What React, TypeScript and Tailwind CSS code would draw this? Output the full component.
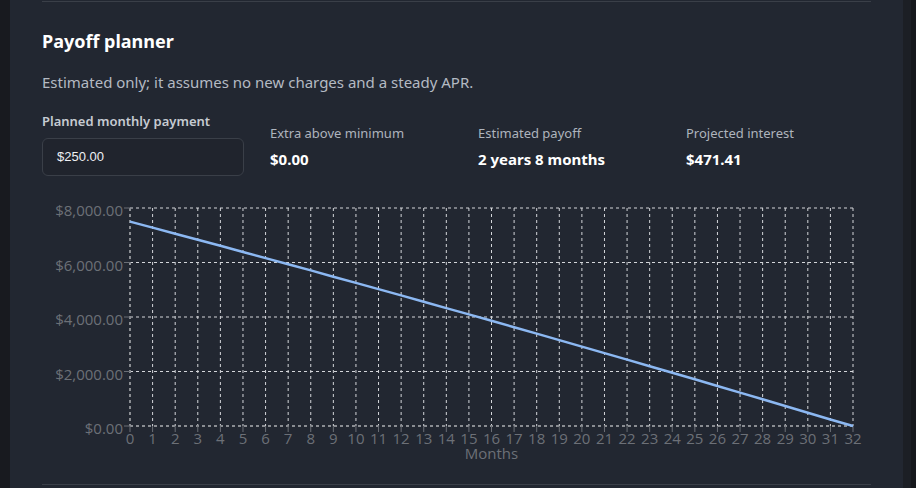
import React from 'react';

const MONTHS = 32;
const START_BALANCE = 7500;
const APR = 0.0465;
const PAYMENT = 250;

// plot geometry, in svg coordinates (svg starts at the card content's left edge)
const W = 829;
const H = 266;
const LEFT = 88;
const RIGHT = 811;
const TOP = 12;
const BOTTOM = 230;
const Y_MAX = 8000;

function buildSchedule() {
  const out: number[] = [START_BALANCE];
  let b = START_BALANCE;
  for (let m = 1; m <= MONTHS; m++) {
    b = b * (1 + APR / 12) - PAYMENT;
    if (b < 0 || m === MONTHS) b = 0;
    out.push(b);
  }
  return out;
}

const xFor = (m: number) => LEFT + ((RIGHT - LEFT) * m) / MONTHS;
const yFor = (v: number) => BOTTOM - ((BOTTOM - TOP) * v) / Y_MAX;

function PayoffChart() {
  const schedule = buildSchedule();
  const months = Array.from({ length: MONTHS + 1 }, (_, i) => i);
  const yTicks = [0, 2000, 4000, 6000, 8000];
  const path = schedule.map((v, i) => `${i === 0 ? 'M' : 'L'}${xFor(i).toFixed(1)},${yFor(v).toFixed(1)}`).join(' ');

  return (
    <svg width={W} height={H} className="block" style={{ fontFamily: '"Open Sans", "Noto Sans", sans-serif' }}>
      {/* grid */}
      {months.slice(1).map((m) => (
        <line key={`v${m}`} x1={xFor(m)} x2={xFor(m)} y1={TOP} y2={BOTTOM} stroke="#d4d6da" strokeDasharray="3 3" strokeWidth={1} />
      ))}
      {yTicks.slice(1).map((t) => (
        <line key={`h${t}`} x1={LEFT} x2={RIGHT} y1={yFor(t)} y2={yFor(t)} stroke="#d4d6da" strokeDasharray="3 3" strokeWidth={1} />
      ))}

      {/* axes */}
      <line x1={LEFT} x2={LEFT} y1={TOP} y2={BOTTOM} stroke="#8a8d92" strokeDasharray="3 3" strokeWidth={2} />
      <line x1={LEFT} x2={RIGHT} y1={BOTTOM} y2={BOTTOM} stroke="#8a8d92" strokeDasharray="3 3" strokeWidth={2} />

      {/* y ticks + labels */}
      {yTicks.map((t) => (
        <g key={`yt${t}`}>
          <line x1={LEFT - 6} x2={LEFT} y1={yFor(t)} y2={yFor(t)} stroke="#6b6f76" strokeWidth={1} />
          <text x={LEFT - 7} y={yFor(t) + 8} textAnchor="end" fontSize={15} fill="#6c7077">
            ${t.toLocaleString('en-US', { minimumFractionDigits: 2 })}
          </text>
        </g>
      ))}

      {/* x ticks + labels */}
      {months.map((m) => (
        <g key={`xt${m}`}>
          <line x1={xFor(m)} x2={xFor(m)} y1={BOTTOM} y2={BOTTOM + 6} stroke="#6b6f76" strokeWidth={1} />
          <text x={xFor(m)} y={BOTTOM + 18} textAnchor="middle" fontSize={15} fill="#6c7077">
            {m}
          </text>
        </g>
      ))}
      <text x={(LEFT + RIGHT) / 2} y={BOTTOM + 33} textAnchor="middle" fontSize={15} fill="#6c7077">
        Months
      </text>

      <path d={path} fill="none" stroke="#8cb8f2" strokeWidth={2.5} strokeLinejoin="round" />
    </svg>
  );
}

function Stat({ label, value }: { label: string; value: string }) {
  return (
    <div className="flex flex-col pt-[12px]">
      <span className="text-[13px] leading-[18px] text-[#aeb4bd]">{label}</span>
      <span className="mt-[7px] text-[15px] leading-[20px] font-bold text-white">{value}</span>
    </div>
  );
}

export default function App() {
  return (
    <div className="flex h-[488px] w-[916px] overflow-hidden bg-[#181a1f]" style={{ fontFamily: '"Noto Sans", "Open Sans", sans-serif' }}>
      <div className="w-[10px] shrink-0" />
      <div className="flex-1 bg-[#222731] px-8">
        <div className="mt-px h-px bg-[#3a3f48]" />
        <h2 className="mt-[27px] text-[18px] leading-[24px] font-bold text-white">Payoff planner</h2>
        <p className="mt-[19px] text-[15px] leading-[20px] text-[#b4bac3]">
          Estimated only; it assumes no new charges and a steady APR.
        </p>

        <div className="mt-[20px] grid grid-cols-[202px_182px_182px_182px] gap-x-[26px]">
          <div className="flex flex-col">
            <label className="text-[13px] leading-[18px] font-semibold text-[#c6cbd2]">Planned monthly payment</label>
            <div className="mt-[8px] flex h-[38px] items-center rounded-md border border-[#3a3f48] bg-[#20242d] px-[14px]">
              <span className="text-[13px] text-[#eef0f3]" style={{ fontFamily: '"Liberation Sans", Arial, sans-serif' }}>
                $250.00
              </span>
            </div>
          </div>
          <Stat label="Extra above minimum" value="$0.00" />
          <Stat label="Estimated payoff" value="2 years 8 months" />
          <Stat label="Projected interest" value="$471.41" />
        </div>

        <div className="mt-[20px]">
          <PayoffChart />
        </div>
        <div className="mt-[22px] h-px bg-[#3a3f48]" />
      </div>
      <div className="w-[8px] shrink-0 bg-[#1c1f25]" />
      <div className="w-[5px] shrink-0 bg-[#16181c]" />
    </div>
  );
}
